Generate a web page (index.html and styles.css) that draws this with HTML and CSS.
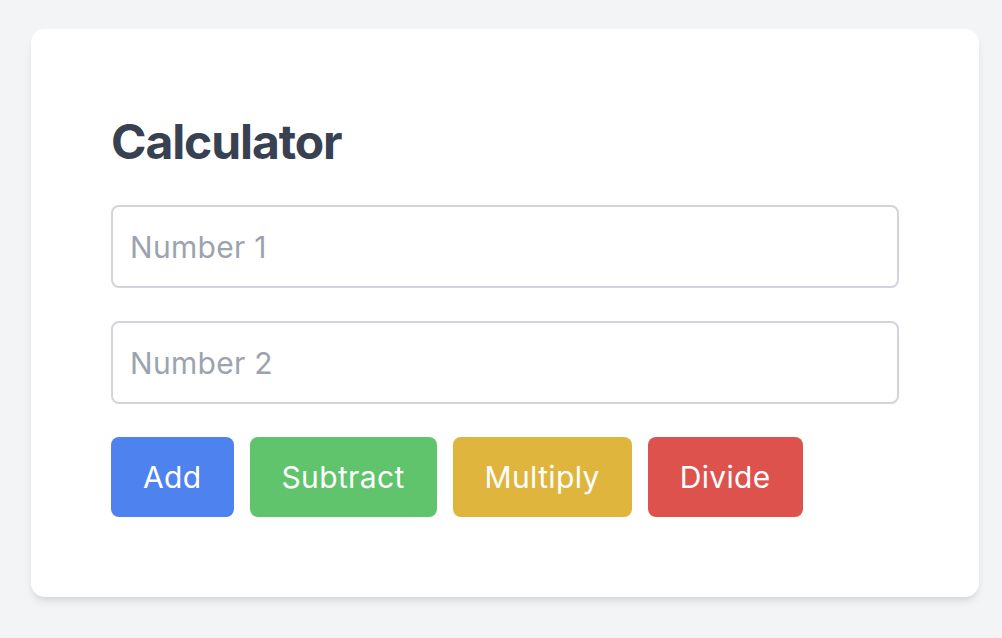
FILE: index.html
```html
<!DOCTYPE html>
<html lang="en">
<head>
<meta charset="utf-8">
<title>Calculator</title>
<link rel="stylesheet" href="styles.css">
</head>
<body>
  <main class="card">
    <h1 class="title">Calculator</h1>
    <input class="field" type="number" placeholder="Number 1">
    <input class="field" type="number" placeholder="Number 2">
    <div class="actions">
      <button class="btn btn-add">Add</button>
      <button class="btn btn-sub">Subtract</button>
      <button class="btn btn-mul">Multiply</button>
      <button class="btn btn-div">Divide</button>
    </div>
  </main>
</body>
</html>
```
FILE: styles.css
```css
* { box-sizing: border-box; }
html, body { margin: 0; }
body {
  background: #f3f4f6;
  font-family: Inter, "Liberation Sans", sans-serif;
  padding: 29px 23px 0 31px;
  min-height: 638px;
}
.card {
  background: #ffffff;
  border-radius: 14px;
  box-shadow: 0 6px 10px -2px rgba(0,0,0,0.10), 0 3px 6px -3px rgba(0,0,0,0.08);
  padding: 80px;
  display: flex;
  flex-direction: column;
}
.title {
  margin: 0 0 32px;
  padding-top: 2px;
  font-size: 48px;
  line-height: 62px;
  font-weight: 700;
  color: #374151;
  letter-spacing: -1.1px;
}
.field {
  display: block;
  width: 100%;
  height: 83px;
  margin: 0 0 33px;
  padding: 0 17px;
  border: 2px solid #d1d5db;
  border-radius: 8px;
  font-family: inherit;
  font-size: 30px;
  letter-spacing: 0.3px;
  color: #111827;
  background: #fff;
  outline: none;
}
.field::placeholder { color: #9ca3af; }
.actions {
  display: flex;
  gap: 16px;
}
.btn {
  height: 80px;
  padding: 0 32px;
  border: 0;
  border-radius: 8px;
  font-family: inherit;
  font-size: 30px;
  letter-spacing: 0.35px;
  color: #ffffff;
  cursor: pointer;
}
.btn-add { background: #4e82ee; }
.btn-sub { background: #5fc46b; }
.btn-mul { background: #e0b53d; }
.btn-div { background: #de524e; }
```
